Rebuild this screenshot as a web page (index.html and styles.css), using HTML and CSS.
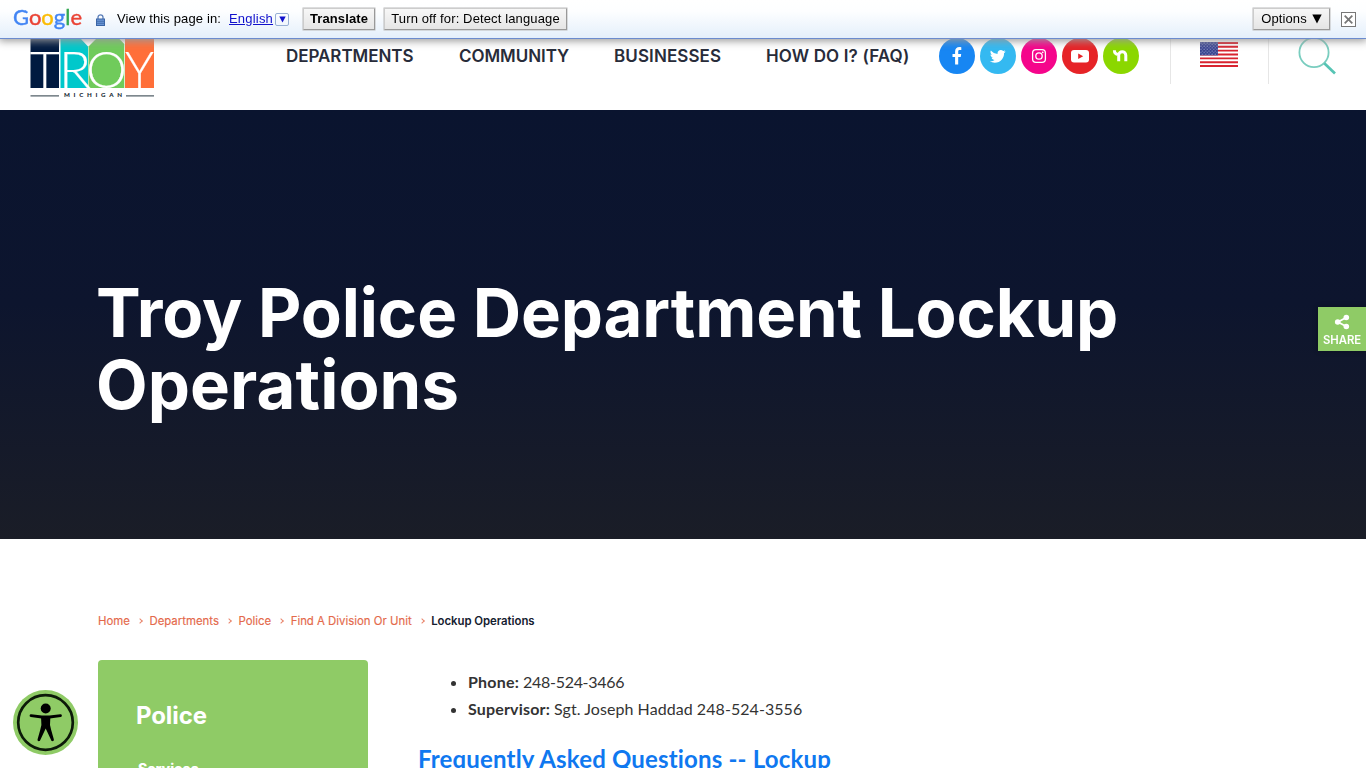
FILE: index.html
```
<!DOCTYPE html>
<html lang="en">
<head>
<meta charset="utf-8">
<title>Troy Police Department Lockup Operations</title>
<link rel="stylesheet" href="styles.css">
</head>
<body>
<div class="translate-bar">
  <svg class="google" width="72" height="30" viewBox="0 0 72 30" role="img" aria-label="Google">
    <text x="1" y="21" textLength="69" lengthAdjust="spacingAndGlyphs"><tspan fill="#4285f4" stroke="#4285f4">G</tspan><tspan fill="#ea4335" stroke="#ea4335">o</tspan><tspan fill="#fbbc05" stroke="#fbbc05">o</tspan><tspan fill="#4285f4" stroke="#4285f4">g</tspan><tspan fill="#34a853" stroke="#34a853">l</tspan><tspan fill="#ea4335" stroke="#ea4335">e</tspan></text>
  </svg>
  <svg class="lock" width="9" height="12" viewBox="0 0 9 12">
    <path d="M2 5V3.2C2 .1 7 .1 7 3.2V5" fill="none" stroke="#5c7fb8" stroke-width="1.3"/>
    <rect x=".5" y="5" width="8" height="6.5" fill="#6b96d6" stroke="#3b65a5"/>
    <path d="M1 7.3h7M1 9.3h7" stroke="#3b65a5" stroke-width=".8"/>
  </svg>
  <span class="view">View this page in:</span>
  <a class="lang" href="#">English</a>
  <span class="lang-arrow"><svg width="7" height="7" viewBox="0 0 7 7"><path d="M.3.5h6.4L3.5 6.5z" fill="#11c"/></svg></span>
  <button class="btn btn-translate">Translate</button>
  <button class="btn btn-off">Turn off for: Detect language</button>
  <button class="btn btn-options">Options <svg width="10" height="10" viewBox="0 0 10 10"><path d="M.3.5h9.4L5 9.5z"/></svg></button>
  <span class="close"><svg width="9" height="9" viewBox="0 0 9 9"><path d="M.7.7l7.6 7.6M8.3.7L.7 8.3" stroke="#777" stroke-width="1.8"/></svg></span>
</div>

<header class="site-header">
  <svg class="logo" width="126" height="66" viewBox="0 0 126 66">
    <path d="M.5 0H29v56H.5z" fill="#001a40"/>
    <path d="M30.5 0H51v7l7 7.5V56H30.5z" fill="#00c8cb"/>
    <path d="M58.5 14.5L66 7h23.5l4.8 5V56H58.5z" fill="#70cb5b"/>
    <path d="M95 0h29v56H95z" fill="#ff6f39"/>
    <g class="logo-letters" fill="#fff" stroke="#fff" stroke-width=".15">
      <text x="-.3" y="56" textLength="30" lengthAdjust="spacingAndGlyphs">T</text>
      <text x="29" y="56" textLength="32" lengthAdjust="spacingAndGlyphs">R</text>
      <text x="56" y="56" textLength="41" lengthAdjust="spacingAndGlyphs">O</text>
      <text x="95" y="56" textLength="29" lengthAdjust="spacingAndGlyphs">Y</text>
    </g>
    <path d="M.5 63.8H29M96 63.8h28" stroke="#536068" stroke-width="1.3"/>
    <text class="logo-state" x="34" y="65.3" textLength="58">MICHIGAN</text>
  </svg>
  <nav class="main-nav">
    <a class="n-dep" href="#">DEPARTMENTS</a>
    <a class="n-com" href="#">COMMUNITY</a>
    <a class="n-bus" href="#">BUSINESSES</a>
    <a class="n-how" href="#">HOW DO I? (FAQ)</a>
  </nav>
  <div class="social">
    <a class="facebook" href="#"><svg viewBox="0 0 36 36"><path d="M16.1 26.5V19h-2.6v-3.1h2.6v-2.4c0-3 1.7-4.5 4.2-4.5.8 0 1.6.1 2 .2v2.7h-1.6c-1.2 0-1.5.7-1.5 1.5v2.5h3l-.5 3.1h-2.5v7.5z" fill="#fff"/></svg></a>
    <a class="twitter" href="#"><svg viewBox="0 0 36 36"><path transform="translate(9.8 10.4) scale(.031)" d="M459.4 151.7c.3 4.5.3 9.1.3 13.6 0 138.7-105.6 298.6-298.6 298.6-59.5 0-114.7-17.2-161.1-47.1 8.4 1 16.6 1.3 25.3 1.3 49.1 0 94.2-16.6 130.3-44.8-46.1-1-84.8-31.2-98.1-72.8 6.5 1 13 1.6 19.8 1.6 9.4 0 18.8-1.3 27.6-3.6-48.1-9.7-84.1-52-84.1-103v-1.3c14 7.8 30.2 12.7 47.4 13.3-28.3-18.8-46.8-51-46.8-87.4 0-19.5 5.2-37.4 14.3-53 51.7 63.7 129.3 105.3 216.4 109.8-1.6-7.8-2.6-15.9-2.6-24 0-57.8 46.8-104.9 104.9-104.9 30.2 0 57.5 12.7 76.7 33.1 23.7-4.5 46.5-13.3 66.6-25.3-7.8 24.4-24.4 44.8-46.1 57.8 21.1-2.3 41.6-8.1 60.4-16.2-14.3 20.8-32.2 39.3-52.6 54.3z" fill="#fff"/></svg></a>
    <a class="instagram" href="#"><svg viewBox="0 0 36 36"><g fill="none" stroke="#fff" stroke-width="1.3"><rect x="11.6" y="11.6" width="12.8" height="12.8" rx="3.4"/><circle cx="18" cy="18" r="3.2"/></g><circle cx="21.7" cy="14.3" r=".9" fill="#fff"/></svg></a>
    <a class="youtube" href="#"><svg viewBox="0 0 36 36"><rect x="9" y="12" width="18" height="12.6" rx="3" fill="#fff"/><path d="M16.2 15.5l5 2.8-5 2.8z" fill="#e62327"/></svg></a>
    <a class="nextdoor" href="#"><svg viewBox="0 0 36 36"><path d="M11.4 12.3c0 2.8 1 4 4 4.3M15.7 23.3v-6c0-4.7 7.1-4.7 7.1 0v6" fill="none" stroke="#fff" stroke-width="3"/></svg></a>
  </div>
  <div class="flag-cell">
    <svg width="38" height="25" viewBox="0 0 38 25">
      <defs><pattern id="stars" width="3.2" height="3.2" patternUnits="userSpaceOnUse"><circle cx=".9" cy=".9" r=".48" fill="#cbd0eb"/><circle cx="2.5" cy="2.5" r=".48" fill="#cbd0eb"/></pattern></defs>
      <path d="M0 0h38v25H0z" fill="#fff"/>
      <path d="M0 .96h38M0 4.8h38M0 8.65h38M0 12.5h38M0 16.35h38M0 20.2h38M0 24.04h38" stroke="#d8232f" stroke-width="1.92"/>
      <path d="M0 0h18v13.4H0z" fill="#36418e"/><path d="M0 0h18v13.4H0z" fill="url(#stars)"/>
    </svg>
  </div>
  <a class="search" href="#"><svg width="40" height="40" viewBox="0 0 40 40"><circle cx="17" cy="16.5" r="14.6" fill="none" stroke="#79cdbf" stroke-width="1.8"/><path d="M27.3 27.3L38 37.5" stroke="#56c4b4" stroke-width="2.7"/></svg></a>
</header>

<section class="hero"><h1>Troy Police Department Lockup<br><span>Operations</span></h1></section>

<main class="page">
  <nav class="crumbs">
    <a href="#">Home</a><i></i><a href="#">Departments</a><i></i><a href="#">Police</a><i></i><a href="#">Find A Division Or Unit</a><i></i><b>Lockup Operations</b>
  </nav>
  <div class="columns">
    <aside class="side">
      <h2>Police</h2>
      <a href="#">Services</a>
    </aside>
    <article class="content">
      <ul>
        <li><b class="phone">Phone:</b> <span class="number">248-524-3466</span></li>
        <li><b class="supervisor">Supervisor:</b> <span class="officer">Sgt. Joseph Haddad 248-524-3556</span></li>
      </ul>
      <h2>Frequently Asked Questions -- Lockup</h2>
    </article>
  </div>
</main>

<a class="share" href="#">
  <svg width="16" height="16" viewBox="0 0 16 16"><path d="M12.3 3.5L4 8l8.3 4.5" fill="none" stroke="#fff" stroke-width="1.8"/><g fill="#fff"><circle cx="12.3" cy="3.5" r="2.8"/><circle cx="3.7" cy="8" r="2.8"/><circle cx="12.3" cy="12.5" r="2.8"/></g></svg>
  <span>SHARE</span>
</a>
<a class="accessibility" href="#">
  <svg width="65" height="65" viewBox="0 0 65 65">
    <circle cx="32.5" cy="32.5" r="32.5" fill="#8fcb66"/>
    <circle cx="32.5" cy="32.5" r="27.3" fill="none" stroke="#0c1a09" stroke-width="2.7"/>
    <circle cx="32.7" cy="18.5" r="5"/>
    <path d="M18 25.6l10.7 1.4h8L47.5 25.6" fill="none" stroke="#000" stroke-width="2.8" stroke-linecap="round"/>
    <path d="M28 26h9.4l-.4 9 1.2 5 2.6 9.3c.6 2-2 2.8-2.7.8l-5.4-11.6-5.4 11.6c-.7 2-3.3 1.2-2.7-.8l2.6-9.3 1.2-5z"/>
  </svg>
</a>
</body>
</html>
```
FILE: styles.css
```
* { box-sizing: border-box; }
body {
  margin: 0;
  height: 768px;
  overflow: hidden;
  background: #fff;
  color: #333;
  font-family: Inter, "Liberation Sans", sans-serif;
}
a { text-decoration: none; }
h1, h2, ul { margin: 0; }
svg { display: block; flex: none; }

.translate-bar {
  position: fixed;
  inset: 0 0 auto;
  z-index: 5;
  display: flex;
  align-items: center;
  height: 39px;
  padding: 0 10px 1px 12px;
  border-bottom: 1px solid #6b8bce;
  background: linear-gradient(#fff, #fdfeff 30%, #e4effb);
  box-shadow: 0 1px 8px 1px #999;
  font: 13px "Liberation Sans", Arial, sans-serif;
  letter-spacing: .13px;
  color: #000;
  white-space: nowrap;
}
.google { font: 21px Lato, sans-serif; letter-spacing: 0; }
.google text { stroke-width: .4px; }
.lock { margin: 2px 12px 0; }
.view { width: 112px; }
.lang { width: 44px; color: #11c; text-decoration: underline; letter-spacing: .2px; }
.lang-arrow {
  display: grid;
  place-items: center;
  width: 14px;
  height: 13px;
  margin: 2px 14px 0 2px;
  border: 1px solid #97afd4;
  border-radius: 2px;
}
.btn {
  height: 22px;
  padding: 0;
  border: 1px solid;
  border-color: #ccc #999 #999 #ccc;
  background: linear-gradient(#f7f7f7, #e5e5e5);
  box-shadow: 0 0 0 .5px #bbb;
  font: inherit;
  letter-spacing: inherit;
  color: #000;
}
.btn-translate { width: 72px; margin-right: 9px; font-weight: 700; letter-spacing: .1px; }
.btn-off { width: 183px; }
.btn-options {
  display: flex;
  align-items: center;
  justify-content: center;
  gap: 5px;
  width: 77px;
  margin-left: auto;
}
.close {
  display: grid;
  place-items: center;
  width: 15px;
  height: 15px;
  margin: 1px 0 0 11px;
  border: 1px solid #777;
  background: #fff;
}

.site-header {
  display: flex;
  align-items: flex-start;
  height: 110px;
  padding: 32px 28px 0 30px;
  background: #fff;
}
.logo-letters { font: 300 51.5px Lato, sans-serif; }
.logo-state { font: 900 6.2px Lato, sans-serif; fill: #202b35; }
.main-nav {
  display: flex;
  gap: 45px;
  width: 623px;
  margin: 12px 0 0 130px;
  font: 600 17px/24px Inter, sans-serif;
  white-space: nowrap;
}
.main-nav a { color: #282c3a; }
.n-dep { width: 128px; letter-spacing: -.05px; }
.n-com { width: 110px; letter-spacing: -.05px; }
.n-bus { width: 107px; letter-spacing: .1px; }
.n-how { width: 143px; letter-spacing: .15px; }
.social { display: flex; gap: 5px; margin: 6px 0 0 30px; }
.social a { width: 36px; height: 36px; border-radius: 50%; }
.facebook { background: #1786f3; }
.twitter { background: #34b9f1; }
.instagram { background: #f5058b; }
.youtube { background: #e62327; }
.nextdoor { background: #8bd700; }
.flag-cell {
  width: 99px;
  height: 52px;
  margin-left: 31px;
  padding: 10px 0 0 29px;
  border: solid #e6e6e6;
  border-width: 0 1px;
}
.search { margin: 4px 0 0 28px; }

.hero {
  height: 429px;
  padding: 167px 0 0 96px;
  background: linear-gradient(#0a142f, #0d152e 45%, #1a1d27);
}
.hero h1 {
  font: 700 67px/72px Inter, sans-serif;
  letter-spacing: -.12px;
  color: #fff;
  white-space: nowrap;
}
.hero span { letter-spacing: .1px; }

.page { padding: 74px 98px 0; }
.crumbs {
  display: flex;
  align-items: center;
  height: 16px;
  font-size: 11.4px;
  white-space: nowrap;
}
.crumbs a { color: #e4694b; -webkit-text-stroke: .15px #e4694b; }
.crumbs b { font-weight: 600; color: #14202f; letter-spacing: -.05px; }
.crumbs i {
  width: 4px;
  height: 4px;
  margin: 0 7.5px 0 8px;
  border: solid #e9846b;
  border-width: 1px 1px 0 0;
  transform: rotate(45deg);
}
.columns { display: flex; gap: 50px; margin-top: 31px; }
.side {
  width: 270px;
  height: 400px;
  padding: 40px 38px;
  border-radius: 4px;
  background: #8fcb66;
}
.side h2 { font-size: 24px; font-weight: 700; line-height: 32px; letter-spacing: -.1px; color: #fff; }
.side a {
  display: block;
  margin: 27px 0 0 2px;
  font: 800 14px/20px Inter, sans-serif;
  letter-spacing: -.05px;
  color: #fff;
}
.content { font-family: Lato, sans-serif; }
.content ul { padding: 8px 0 0 50px; }
.content li { font-size: 16px; line-height: 27px; }
.phone { letter-spacing: .2px; }
.number { letter-spacing: -.3px; }
.supervisor { letter-spacing: .17px; }
.officer { letter-spacing: .06px; }
.content h2 {
  margin-top: 21px;
  font-size: 24px;
  font-weight: 700;
  line-height: 32px;
  letter-spacing: .17px;
  color: #0f78f0;
}

.share {
  position: fixed;
  top: 307px;
  right: 0;
  display: flex;
  flex-direction: column;
  align-items: center;
  width: 48px;
  height: 44px;
  padding-top: 7px;
  background: #8fcb66;
  box-shadow: 0 0 5px #0005;
  font: 600 11.3px/16px Inter, sans-serif;
  color: #fff;
}
.share span { margin-top: 2px; }
.accessibility { position: fixed; left: 13px; top: 690px; }
```
